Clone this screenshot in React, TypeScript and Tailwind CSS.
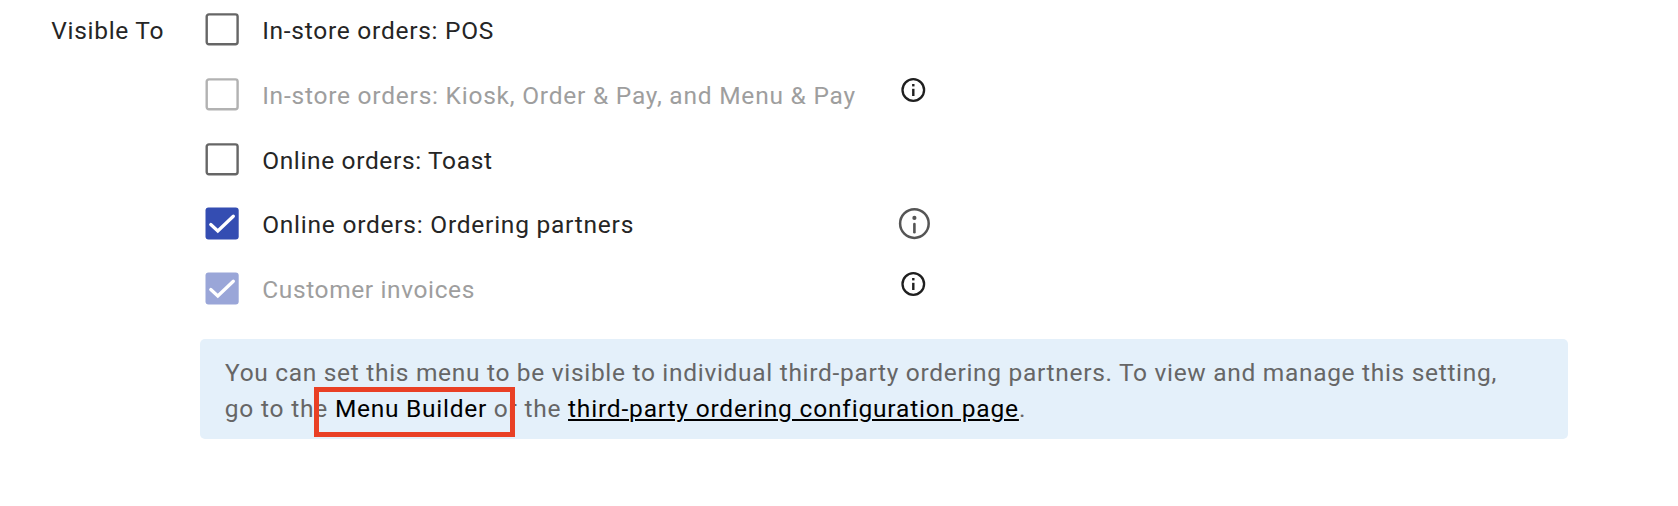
type Option = {
  label: string;
  checked?: boolean;
  disabled?: boolean;
  info?: "small" | "large";
  tracking: string;
};

const OPTIONS: Option[] = [
  { label: "In-store orders: POS", tracking: "tracking-[0.74px]" },
  {
    label: "In-store orders: Kiosk, Order & Pay, and Menu & Pay",
    disabled: true,
    info: "small",
    tracking: "tracking-[0.77px]",
  },
  { label: "Online orders: Toast", tracking: "tracking-[0.64px]" },
  { label: "Online orders: Ordering partners", checked: true, info: "large", tracking: "tracking-[0.76px]" },
  { label: "Customer invoices", checked: true, disabled: true, info: "small", tracking: "tracking-[0.62px]" },
];

function Checkbox({ checked, disabled }: { checked?: boolean; disabled?: boolean }) {
  const stroke = disabled ? "#b2b2b2" : "#666666";
  const fill = disabled ? "#9aa6d8" : "#344db2";
  return (
    <svg viewBox="0 0 34 33" className="block h-[33px] w-[34px] shrink-0" fill="none" aria-hidden="true">
      {checked ? (
        <>
          <rect x="0.5" y="0.4" width="33.2" height="32.2" rx="3" fill={fill} />
          <path
            d="M5.8 17.6 L12.8 23.9 L28.3 9.2"
            stroke="white"
            strokeWidth="3.3"
            strokeLinecap="round"
            strokeLinejoin="miter"
          />
        </>
      ) : (
        <rect x="1.7" y="1.4" width="30.9" height="29.9" rx="2.2" stroke={stroke} strokeWidth="2.4" />
      )}
    </svg>
  );
}

function InfoSmall() {
  return (
    <svg viewBox="0 0 24 24" className="ml-[3px] block size-6 overflow-visible" fill="none" aria-hidden="true">
      <g transform="translate(0.3 0)">
        <circle cx="12" cy="12" r="10.8" stroke="#1f1f1f" strokeWidth="2.3" />
        <rect x="10.8" y="6" width="2.4" height="2.4" fill="#1f1f1f" />
        <rect x="10.8" y="10.8" width="2.4" height="7.2" fill="#1f1f1f" />
      </g>
    </svg>
  );
}

function InfoLarge() {
  return (
    <svg viewBox="0 0 32 32" className="mt-px block size-8" fill="none" aria-hidden="true">
      <circle cx="16.4" cy="15.6" r="14.3" stroke="#555555" strokeWidth="2.5" />
      <circle cx="16.4" cy="9.9" r="2.1" fill="#555555" />
      <path d="M16.4 16V24.3" stroke="#555555" strokeWidth="2.6" strokeLinecap="round" />
    </svg>
  );
}

export default function App() {
  return (
    <main className="h-[506px] w-[1678px] overflow-hidden bg-white pt-[13.3px] font-['Roboto',sans-serif] text-[24.5px] leading-9 text-[#252525]">
      <div className="flex">
        <div className="w-[205px] shrink-0 pl-[51.3px] tracking-[0.7px] whitespace-nowrap">Visible To</div>
        <ul className="flex flex-col">
          {OPTIONS.map((o) => (
            <li key={o.label} className="flex h-[64.7px] items-start">
              <Checkbox checked={o.checked} disabled={o.disabled} />
              <span
                className={`ml-[23.2px] w-[635.9px] whitespace-nowrap ${o.tracking} ${o.disabled ? "text-[#9e9e9e]" : ""}`}
              >
                {o.label}
              </span>
              {o.info === "small" && <InfoSmall />}
              {o.info === "large" && <InfoLarge />}
            </li>
          ))}
        </ul>
      </div>
      <div className="mt-[2.2px] ml-[200px] h-[100px] w-[1368px] rounded-[5px] bg-[#e4f0fa] pt-4 pl-[24px] text-[#666666]">
        <p className="whitespace-nowrap">
          <span className="block pl-px tracking-[0.69px]">
            You can set this menu to be visible to individual third-party ordering partners. To view and manage this
            setting,
          </span>
          <span className="block pl-[0.7px]">
            <span className="tracking-[0.81px]">go to the </span>
            <span className="relative inline-block h-9 align-top tracking-[0.72px] text-black">
              Menu Builder
              <span className="absolute -top-1 -left-[21px] z-10 h-[50px] w-[201px] border-[5px] border-[#e94025]" />
            </span>
            <span className="tracking-[0.76px]"> or the </span>
            <a className="tracking-[0.82px] text-black underline decoration-2 underline-offset-[2px]">
              third-party ordering configuration page
            </a>
            .
          </span>
        </p>
      </div>
    </main>
  );
}
